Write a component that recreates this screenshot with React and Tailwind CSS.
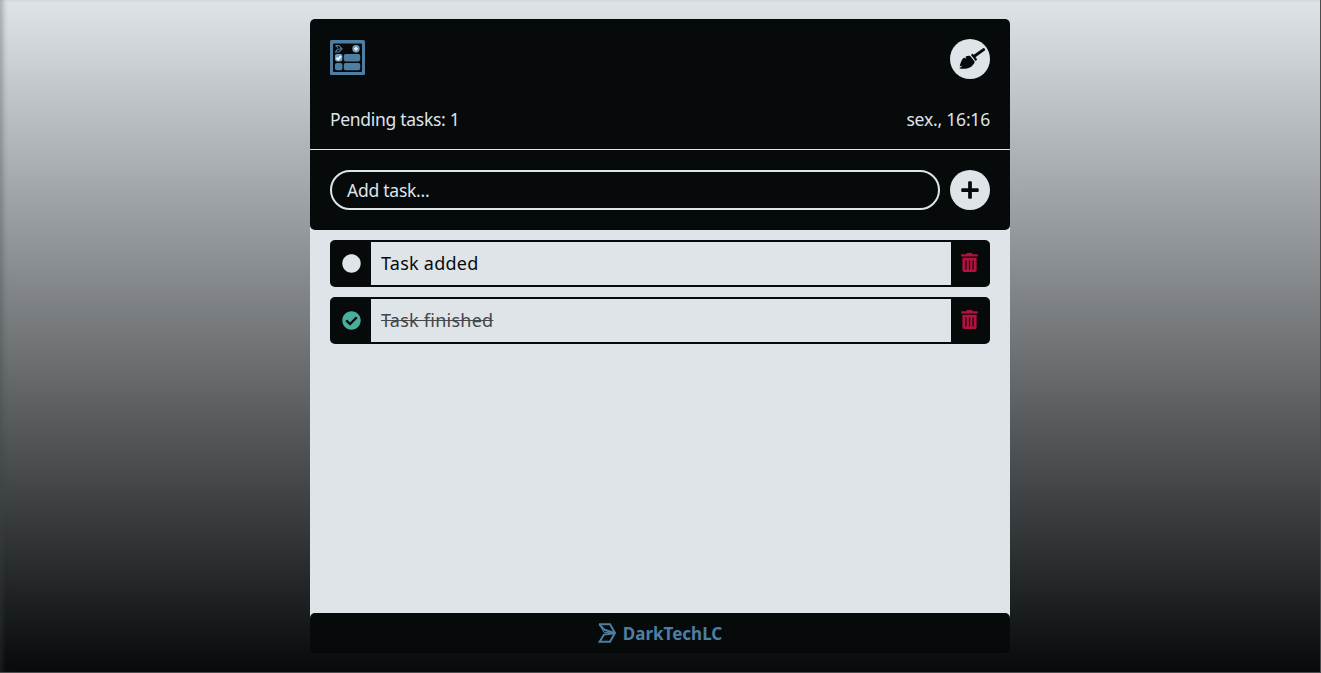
import { FaPlus, FaTrashAlt, FaCheckCircle, FaCircle } from "react-icons/fa";

const tasks = [
  { title: "Task added", done: false },
  { title: "Task finished", done: true },
];

function Mark({ className }) {
  return (
    <svg viewBox="0 0 18 20" className={className} fill="none" stroke="currentColor" strokeWidth="2" strokeLinejoin="miter">
      <path d="M1 1.2H12L17 10L12 18.8H1.6L6 11.6L16.6 10.2" />
      <path d="M1.2 1.4L6.4 6.8L16.6 10" />
      <path d="M1.4 1.4L6 9.4L15 10" strokeWidth="1" />
    </svg>
  );
}

function Broom({ className }) {
  return (
    <svg viewBox="0 0 30 30" className={className} fill="currentColor">
      <path d="M19.6 12L28.6 5.6" stroke="currentColor" strokeWidth="2.9" strokeLinecap="round" />
      <path d="M16 10.9L17.6 9.6L22.2 15.6L20.6 17Z" />
      <path d="M15.2 12L19.8 17.8C19 20 17.2 22.4 14.8 23.6C12 25 8 25 4.4 24.5L7.4 21.6L4.6 22.4C5.4 19 6.6 16 8.6 13.8L11.4 14.6L10.4 12.8C12 11.8 13.6 11.7 15.2 12Z" />
    </svg>
  );
}

function Logo() {
  return (
    <svg viewBox="0 0 35 35" className="h-[35px] w-[35px]">
      <rect width="35" height="35" rx="1.5" fill="#4e7fa3" />
      <rect x="3" y="3.5" width="29" height="28.5" rx="1" fill="#070a0b" />
      <path d="M5.5 5.5H9L12 8.8L9 12H5.5L7.5 9.2L12 8.8M5.5 5.5L8 7.7" fill="none" stroke="#4e7fa3" strokeWidth="1.1" />
      <circle cx="26" cy="8.8" r="3.7" fill="#6f9dbe" />
      <path d="M26 6.8V10.8M24 8.8H28" stroke="#e5edf4" strokeWidth="1.6" />
      <rect x="5" y="14" width="7.4" height="7.4" rx="1.8" fill="#6f9dbe" />
      <path d="M6.5 17.7L8.2 19.4L11 16" fill="none" stroke="#f1f5f9" strokeWidth="2" />
      <rect x="13.8" y="14" width="16.4" height="7.4" rx="1.8" fill="#4e7fa3" />
      <rect x="5" y="22.9" width="7.4" height="7.3" rx="1.8" fill="#4e7fa3" />
      <rect x="13.8" y="22.9" width="16.4" height="7.3" rx="1.8" fill="#4e7fa3" />
    </svg>
  );
}

function Task({ title, done }) {
  return (
    <li className="flex h-[47px] items-stretch overflow-hidden rounded-[5px] border-y-2 border-[#070a0b] bg-[#070a0b]">
      <button className="flex w-[41px] items-center justify-center pb-px pl-0.5" aria-label="Toggle task">
        {done ? <FaCheckCircle className="size-[19px] text-[#48b09a]" /> : <FaCircle className="size-[19px] text-[#dfe4e9]" />}
      </button>
      <div className="flex flex-1 items-center bg-[#dfe4e9] pl-[10px]">
        <span className={done ? "text-[18px] tracking-[0.25px] text-[#44484b] line-through decoration-1" : "text-[18px] tracking-[0.25px] text-[#070a0b]"}>{title}</span>
      </div>
      <button className="flex w-[39px] items-center justify-center pr-[2px] pb-[2px]" aria-label="Delete task">
        <FaTrashAlt className="size-[19px] text-[#b3123f]" />
      </button>
    </li>
  );
}

export default function App() {
  return (
    <div className="flex h-[673px] justify-center border-r border-b border-[#4b4d4e] bg-[linear-gradient(to_bottom,#dfe4e9,#070a0b)] pt-[19px] font-['Noto_Sans',sans-serif] shadow-[inset_5px_0_5px_-2px_rgba(60,66,68,0.35)]">
      <main className="flex h-[634px] w-[700px] flex-col">
        <div className="flex flex-1 flex-col rounded-t-[5px] bg-[#dfe4e9]">
          <header className="h-[211px] rounded-[5px] bg-[#070a0b] text-[#dfe4e9]">
            <div className="flex h-[131px] flex-col justify-between border-b border-[#dfe4e9] px-5 pt-5 pb-[17px]">
              <div className="flex items-start justify-between">
                <div className="pt-px"><Logo /></div>
                <button className="flex size-10 items-center justify-center rounded-full bg-[#dfe4e9] text-[#070a0b]" aria-label="Clear tasks">
                  <Broom className="size-[30px]" />
                </button>
              </div>
              <div className="flex justify-between text-[17.5px] leading-[26px] tracking-[-0.3px]">
                <span>Pending tasks: 1</span>
                <span className="tracking-[-0.2px]">sex., 16:16</span>
              </div>
            </div>
            <form className="flex gap-[10px] px-5 pt-5">
              <div className="flex h-10 flex-1 items-center rounded-full border-2 border-[#dfe4e9] pl-[15px] text-[17.5px] tracking-[-0.25px]">Add task...</div>
              <button type="button" className="flex size-10 items-center justify-center rounded-full bg-[#dfe4e9] text-[#070a0b]" aria-label="Add task">
                <FaPlus className="size-5" />
              </button>
            </form>
          </header>
          <ul className="flex flex-1 flex-col gap-[10px] px-5 pt-[10px]">
            {tasks.map((t) => <Task key={t.title} {...t} />)}
          </ul>
        </div>
        <div className="bg-[linear-gradient(to_bottom,#dfe4e9_50%,transparent_50%)]">
          <footer className="flex h-10 items-center justify-center gap-[7px] rounded-[5px] bg-[#070a0b] text-[#4e7fa3]">
            <Mark className="h-5 w-[18px]" />
            <span className="pt-px text-[17px] font-bold">DarkTechLC</span>
          </footer>
        </div>
      </main>
    </div>
  );
}
